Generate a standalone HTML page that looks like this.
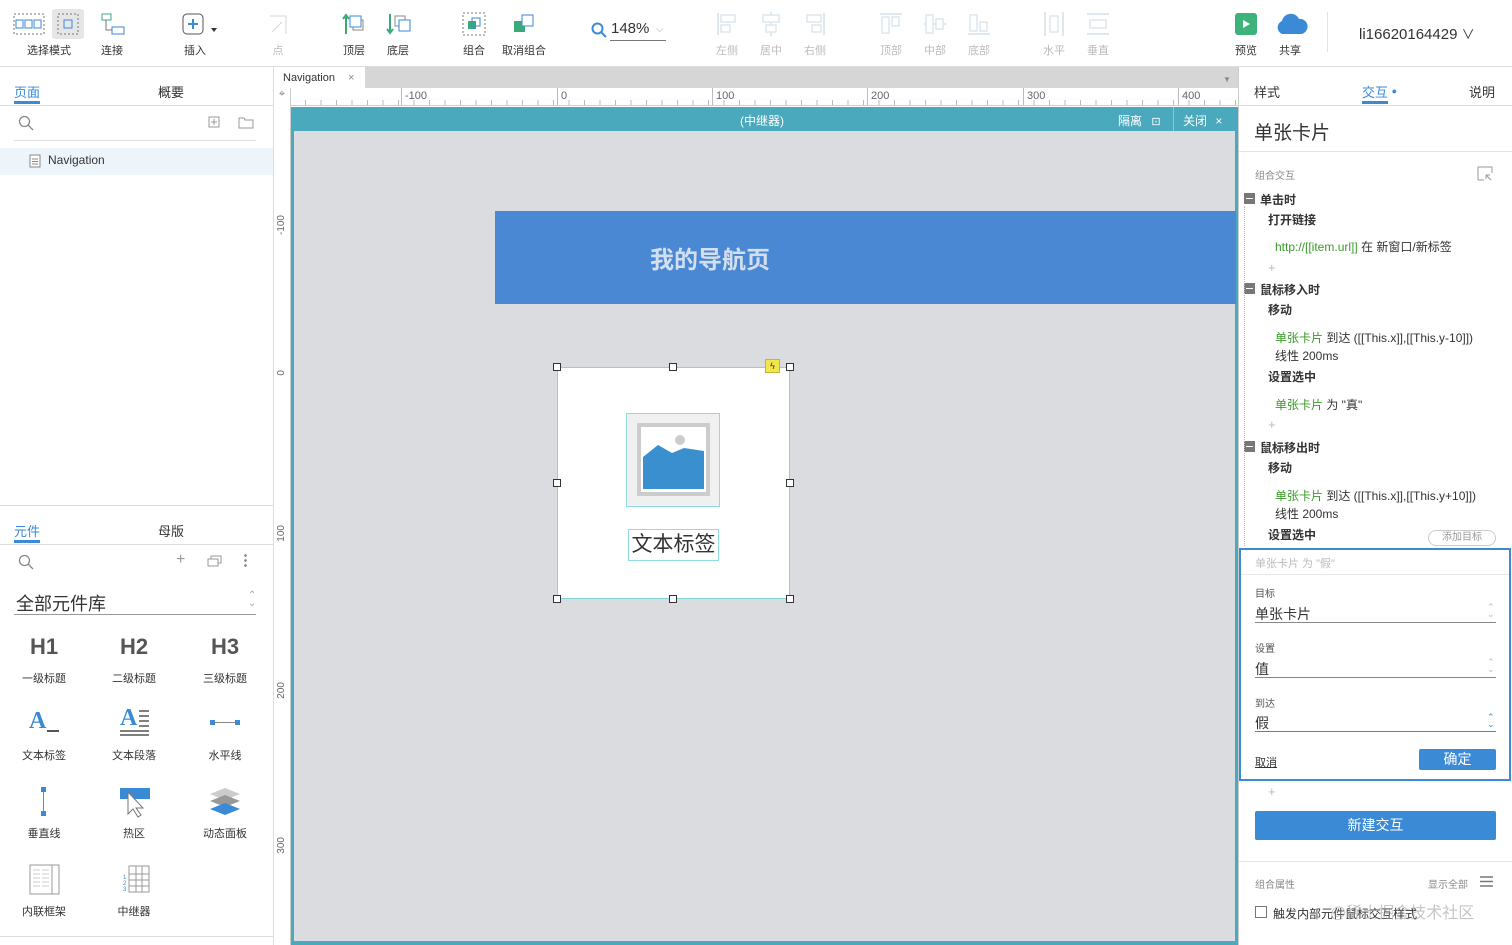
<!DOCTYPE html>
<html><head><meta charset="utf-8"><style>
*{margin:0;padding:0;box-sizing:border-box}
body{width:1512px;height:945px;overflow:hidden;background:#fff;font-family:"Liberation Sans","Noto Sans CJK SC",sans-serif;color:#333;position:relative}
.a{position:absolute}
.tl{position:absolute;font-size:11px;color:#333;text-align:center;width:70px}
.dis{color:#bbb}
.ico{position:absolute}
.rt{font-size:12px;color:#333}
.g{color:#3a9a2a}
.b{font-weight:bold}
.al{position:absolute;top:12px;width:22px;height:24px}
</style></head><body>
<!-- toolbar -->
<div class="a" style="left:0;top:0;width:1512px;height:67px;border-bottom:1px solid #ddd;background:#fff"></div>
<div class="a" style="left:52px;top:9px;width:32px;height:30px;background:#e6e6e6;border-radius:3px"></div>
<svg class="ico" style="left:13px;top:13px" width="32" height="22"><rect x="1" y="1" width="30" height="20" fill="none" stroke="#777" stroke-dasharray="2 2"/><rect x="3" y="7" width="7" height="8" fill="none" stroke="#3a8ad6"/><rect x="12" y="7" width="7" height="8" fill="none" stroke="#3a8ad6"/><rect x="21" y="7" width="7" height="8" fill="none" stroke="#3a8ad6"/></svg>
<svg class="ico" style="left:57px;top:13px" width="22" height="22"><rect x="1" y="1" width="20" height="20" fill="none" stroke="#777" stroke-dasharray="2 2"/><rect x="7" y="7" width="8" height="8" fill="none" stroke="#3a8ad6"/></svg>
<svg class="ico" style="left:101px;top:13px" width="24" height="22"><rect x="1" y="1" width="9" height="6" fill="none" stroke="#3aaa7a"/><rect x="11" y="14" width="12" height="7" fill="none" stroke="#3a8ad6"/><path d="M5 7v10h6" fill="none" stroke="#777"/></svg>
<svg class="ico" style="left:182px;top:13px" width="36" height="24"><rect x="1" y="1" width="20" height="20" rx="4" fill="none" stroke="#555"/><path d="M11 6v10M6 11h10" stroke="#3a8ad6" stroke-width="2"/><path d="M29 15l3 4 3-4z" fill="#333"/></svg>
<svg class="ico" style="left:268px;top:14px" width="22" height="22" opacity=".35"><path d="M2 2h16v18M4 18l10-10" fill="none" stroke="#888"/></svg>
<svg class="ico" style="left:342px;top:12px" width="26" height="24"><path d="M4 22V3M1 7l3-4 3 4" fill="none" stroke="#3aaa7a" stroke-width="2"/><rect x="11" y="8" width="10" height="10" fill="none" stroke="#888"/><rect x="8" y="4" width="11" height="11" fill="#fff" stroke="#3a8ad6"/></svg>
<svg class="ico" style="left:386px;top:12px" width="26" height="24"><path d="M4 2v19M1 17l3 4 3-4" fill="none" stroke="#3aaa7a" stroke-width="2"/><rect x="9" y="4" width="10" height="10" fill="none" stroke="#888"/><rect x="13" y="8" width="11" height="11" fill="#fff" stroke="#3a8ad6"/></svg>
<svg class="ico" style="left:462px;top:12px" width="24" height="24"><rect x="1" y="1" width="22" height="22" fill="none" stroke="#777" stroke-dasharray="2 2"/><rect x="6" y="9" width="8" height="8" fill="#3aaa7a"/><rect x="10" y="6" width="8" height="8" fill="none" stroke="#3a8ad6"/></svg>
<svg class="ico" style="left:512px;top:12px" width="24" height="24"><rect x="2" y="9" width="11" height="11" fill="#3aaa7a"/><rect x="10" y="3" width="11" height="11" fill="#fff" stroke="#3a8ad6"/></svg>
<div class="tl" style="left:14px;top:42px">选择模式</div>
<div class="tl" style="left:77px;top:42px">连接</div>
<div class="tl" style="left:160px;top:42px">插入</div>
<div class="tl dis" style="left:243px;top:42px">点</div>
<div class="tl" style="left:319px;top:42px">顶层</div>
<div class="tl" style="left:363px;top:42px">底层</div>
<div class="tl" style="left:439px;top:42px">组合</div>
<div class="tl" style="left:489px;top:42px">取消组合</div>
<svg class="ico" style="left:591px;top:22px" width="16" height="16"><circle cx="6.5" cy="6.5" r="5" fill="none" stroke="#3a8ad6" stroke-width="2"/><path d="M10 10l5 5" stroke="#3a8ad6" stroke-width="2"/></svg>
<div class="a" style="left:611px;top:20px;font-size:15px;color:#333">148%</div>
<div class="a" style="left:656px;top:24px;font-size:10px;color:#aaa">⌵</div>
<div class="a" style="left:610px;top:40px;width:56px;border-top:1px solid #777"></div>
<svg class="al" style="left:716px"><rect x="1" y="1" width="2" height="22" fill="#dde7ee"/><rect x="5" y="3" width="14" height="7" fill="none" stroke="#dde7ee" stroke-width="1.5"/><rect x="5" y="13" width="9" height="7" fill="none" stroke="#dde7ee" stroke-width="1.5"/></svg>
<svg class="al" style="left:760px"><rect x="10" y="0" width="2" height="24" fill="#dde7ee"/><rect x="3" y="3" width="16" height="7" fill="#fff" stroke="#dde7ee" stroke-width="1.5"/><rect x="6" y="13" width="10" height="7" fill="#fff" stroke="#dde7ee" stroke-width="1.5"/></svg>
<svg class="al" style="left:804px"><rect x="19" y="1" width="2" height="22" fill="#dde7ee"/><rect x="3" y="3" width="14" height="7" fill="none" stroke="#dde7ee" stroke-width="1.5"/><rect x="8" y="13" width="9" height="7" fill="none" stroke="#dde7ee" stroke-width="1.5"/></svg>
<svg class="al" style="left:880px"><rect x="0" y="1" width="22" height="2" fill="#dde7ee"/><rect x="2" y="5" width="7" height="16" fill="none" stroke="#dde7ee" stroke-width="1.5"/><rect x="12" y="5" width="7" height="9" fill="none" stroke="#dde7ee" stroke-width="1.5"/></svg>
<svg class="al" style="left:924px"><rect x="0" y="11" width="22" height="2" fill="#dde7ee"/><rect x="2" y="3" width="7" height="18" fill="#fff" stroke="#dde7ee" stroke-width="1.5"/><rect x="12" y="7" width="7" height="10" fill="#fff" stroke="#dde7ee" stroke-width="1.5"/></svg>
<svg class="al" style="left:968px"><rect x="0" y="21" width="22" height="2" fill="#dde7ee"/><rect x="2" y="3" width="7" height="16" fill="none" stroke="#dde7ee" stroke-width="1.5"/><rect x="12" y="10" width="7" height="9" fill="none" stroke="#dde7ee" stroke-width="1.5"/></svg>
<svg class="al" style="left:1043px"><rect x="1" y="0" width="2" height="24" fill="#dde7ee"/><rect x="19" y="0" width="2" height="24" fill="#dde7ee"/><rect x="7" y="4" width="8" height="16" fill="none" stroke="#dde7ee" stroke-width="1.5"/></svg>
<svg class="al" style="left:1087px"><rect x="0" y="1" width="22" height="2" fill="#dde7ee"/><rect x="0" y="21" width="22" height="2" fill="#dde7ee"/><rect x="3" y="8" width="16" height="8" fill="none" stroke="#dde7ee" stroke-width="1.5"/></svg>
<div class="tl dis" style="left:692px;top:42px">左侧</div>
<div class="tl dis" style="left:736px;top:42px">居中</div>
<div class="tl dis" style="left:780px;top:42px">右侧</div>
<div class="tl dis" style="left:856px;top:42px">顶部</div>
<div class="tl dis" style="left:900px;top:42px">中部</div>
<div class="tl dis" style="left:944px;top:42px">底部</div>
<div class="tl dis" style="left:1019px;top:42px">水平</div>
<div class="tl dis" style="left:1063px;top:42px">垂直</div>
<div class="a" style="left:1235px;top:13px;width:22px;height:22px;background:#3db27a;border-radius:3px"></div>
<svg class="ico" style="left:1242px;top:19px" width="9" height="10"><path d="M1 1l7 4-7 4z" fill="#fff"/></svg>
<svg class="ico" style="left:1274px;top:12px" width="34" height="24"><path d="M8 22a7 7 0 0 1 0-13a9 9 0 0 1 17-2a7 7 0 0 1 2 15z" fill="#3a8ad6"/></svg>
<div class="tl" style="left:1211px;top:42px">预览</div>
<div class="tl" style="left:1255px;top:42px">共享</div>
<div class="a" style="left:1327px;top:12px;height:40px;border-left:1px solid #e4e4e4"></div>
<div class="a" style="left:1359px;top:24px;font-size:15px;color:#333">li16620164429 <span style="font-size:13px">∨</span></div>

<!-- left panel -->
<div class="a" style="left:273px;top:67px;height:878px;border-left:1px solid #ddd"></div>
<div class="a" style="left:14px;top:82px;font-size:13px;color:#3a8ad6">页面</div>
<div class="a" style="left:14px;top:101px;width:26px;height:3px;background:#3a8ad6"></div>
<div class="a" style="left:158px;top:82px;font-size:13px">概要</div>
<div class="a" style="left:0;top:105px;width:273px;border-top:1px solid #ddd"></div>
<svg class="ico" style="left:18px;top:115px" width="16" height="16"><circle cx="6.5" cy="6.5" r="5" fill="none" stroke="#888" stroke-width="1.3"/><path d="M10 10l5 5" stroke="#888" stroke-width="1.3"/></svg>
<svg class="ico" style="left:208px;top:116px" width="46" height="14"><rect x="1" y="1" width="10" height="10" fill="none" stroke="#999"/><path d="M6 3v6M3 6h6" stroke="#999"/><path d="M31 2h5l1 2h8v8H31z" fill="none" stroke="#999"/></svg>
<div class="a" style="left:14px;top:140px;width:242px;border-top:1px solid #ddd"></div>
<div class="a" style="left:0;top:148px;width:273px;height:27px;background:#eef5fa"></div>
<svg class="ico" style="left:29px;top:154px" width="12" height="14"><rect x="1" y="1" width="10" height="12" fill="#fff" stroke="#888"/><path d="M3 5h6M3 7.5h6M3 10h6" stroke="#888"/></svg>
<div class="a" style="left:48px;top:153px;font-size:12px;color:#333">Navigation</div>
<div class="a" style="left:0;top:505px;width:273px;border-top:1px solid #ddd"></div>
<div class="a" style="left:14px;top:521px;font-size:13px;color:#3a8ad6">元件</div>
<div class="a" style="left:14px;top:540px;width:26px;height:3px;background:#3a8ad6"></div>
<div class="a" style="left:158px;top:521px;font-size:13px">母版</div>
<div class="a" style="left:0;top:544px;width:273px;border-top:1px solid #ddd"></div>
<svg class="ico" style="left:18px;top:554px" width="16" height="16"><circle cx="6.5" cy="6.5" r="5" fill="none" stroke="#888" stroke-width="1.3"/><path d="M10 10l5 5" stroke="#888" stroke-width="1.3"/></svg>
<div class="a" style="left:176px;top:551px;font-size:16px;color:#999">+</div>
<svg class="ico" style="left:207px;top:555px" width="16" height="12"><rect x="1" y="4" width="10" height="7" fill="none" stroke="#999"/><path d="M4 4V1h10v7h-3" fill="none" stroke="#999"/></svg>
<div class="a" style="left:244px;top:553px;width:3px;height:14px;background:radial-gradient(circle,#888 1.2px,transparent 1.5px) 0 0/3px 5px"></div>
<div class="a" style="left:16px;top:590px;font-size:18px;color:#333">全部元件库</div>
<div class="a" style="left:248px;top:592px;font-size:10px;color:#aaa;line-height:8px">⌃<br>⌄</div>
<div class="a" style="left:14px;top:614px;width:242px;border-top:1px solid #999"></div>
<div class="a" style="left:30px;top:634px;font-size:22px;font-weight:bold;color:#555">H1</div>
<div class="a" style="left:120px;top:634px;font-size:22px;font-weight:bold;color:#555">H2</div>
<div class="a" style="left:211px;top:634px;font-size:22px;font-weight:bold;color:#555">H3</div>
<div class="tl" style="left:9px;top:670px">一级标题</div>
<div class="tl" style="left:99px;top:670px">二级标题</div>
<div class="tl" style="left:190px;top:670px">三级标题</div>
<div class="a" style="left:29px;top:708px;font-size:24px;font-weight:bold;color:#3a8ad6;font-family:'Liberation Serif',serif">A</div>
<div class="a" style="left:47px;top:730px;width:12px;height:2px;background:#555"></div>
<div class="a" style="left:120px;top:705px;font-size:24px;font-weight:bold;color:#3a8ad6;font-family:'Liberation Serif',serif">A</div>
<svg class="ico" style="left:119px;top:709px" width="32" height="28"><path d="M20 2h10M20 7h10M20 12h10M20 17h10M1 22h29M1 26h29" stroke="#555" stroke-width="1.5"/></svg>
<svg class="ico" style="left:209px;top:718px" width="32" height="10"><rect x="1" y="2" width="5" height="5" fill="#3a8ad6"/><rect x="26" y="2" width="5" height="5" fill="#3a8ad6"/><path d="M6 4.5h20" stroke="#888"/></svg>
<div class="tl" style="left:9px;top:747px">文本标签</div>
<div class="tl" style="left:99px;top:747px">文本段落</div>
<div class="tl" style="left:190px;top:747px">水平线</div>
<svg class="ico" style="left:39px;top:786px" width="10" height="32"><rect x="2" y="1" width="5" height="5" fill="#3a8ad6"/><rect x="2" y="25" width="5" height="5" fill="#3a8ad6"/><path d="M4.5 6v19" stroke="#888"/></svg>
<svg class="ico" style="left:119px;top:787px" width="32" height="32"><rect x="1" y="1" width="30" height="11" fill="#3a8ad6"/><path d="M9 5v22l5-5 5 8 3-2-5-7h7z" fill="#fff" stroke="#777"/></svg>
<svg class="ico" style="left:209px;top:787px" width="32" height="30"><path d="M16 1l15 6-15 6-15-6z" fill="#ccc"/><path d="M16 8l15 6-15 6-15-6z" fill="#999"/><path d="M16 16l15 6-15 6-15-6z" fill="#3a8ad6"/></svg>
<div class="tl" style="left:9px;top:825px">垂直线</div>
<div class="tl" style="left:99px;top:825px">热区</div>
<div class="tl" style="left:190px;top:825px">动态面板</div>
<svg class="ico" style="left:29px;top:864px" width="32" height="32"><rect x="1" y="1" width="29" height="29" fill="#fff" stroke="#999"/><rect x="23" y="1" width="7" height="29" fill="none" stroke="#999"/><path d="M4 6h7M13 6h7M4 10h7M13 10h7M4 14h7M13 14h7M4 18h7M13 18h7M4 22h7M13 22h7" stroke="#ccc"/></svg>
<svg class="ico" style="left:120px;top:864px" width="32" height="32"><path d="M9 2h20v26H9zM9 10h20M9 16h20M9 22h20M16 2v26M22 2v26" fill="none" stroke="#999"/><text x="3" y="15" font-size="6" fill="#3a8ad6">1</text><text x="3" y="21" font-size="6" fill="#3a8ad6">2</text><text x="3" y="27" font-size="6" fill="#3a8ad6">3</text></svg>
<div class="tl" style="left:9px;top:903px">内联框架</div>
<div class="tl" style="left:99px;top:903px">中继器</div>
<div class="a" style="left:0;top:936px;width:273px;border-top:1px solid #ddd"></div>

<!-- canvas -->
<div class="a" style="left:274px;top:67px;width:964px;height:21px;background:#d6d6d6"></div>
<div class="a" style="left:274px;top:67px;width:91px;height:21px;background:#fff;font-size:11px;padding:5px 0 0 9px;color:#333">Navigation <span style="color:#888;margin-left:10px">×</span></div>
<div class="a" style="left:1223px;top:75px;font-size:8px;color:#888">▼</div>
<div class="a" style="left:274px;top:88px;width:964px;height:18px;background:#fff;border-bottom:1px solid #ccc;background-image:repeating-linear-gradient(90deg,#bbb 0 1px,transparent 1px 15.5px);background-size:100% 5px;background-repeat:no-repeat;background-position:0 100%"></div>
<div class="a" style="left:274px;top:88px;width:17px;height:18px;background:#fff;border-right:1px solid #ccc;font-size:11px;color:#888;text-align:center">⌖</div>
<div class="a" style="left:401px;top:88px;height:17px;border-left:1px solid #bbb;font-size:11px;color:#666;padding:2px 3px">-100</div>
<div class="a" style="left:557px;top:88px;height:17px;border-left:1px solid #bbb;font-size:11px;color:#666;padding:2px 3px">0</div>
<div class="a" style="left:712px;top:88px;height:17px;border-left:1px solid #bbb;font-size:11px;color:#666;padding:2px 3px">100</div>
<div class="a" style="left:867px;top:88px;height:17px;border-left:1px solid #bbb;font-size:11px;color:#666;padding:2px 3px">200</div>
<div class="a" style="left:1023px;top:88px;height:17px;border-left:1px solid #bbb;font-size:11px;color:#666;padding:2px 3px">300</div>
<div class="a" style="left:1178px;top:88px;height:17px;border-left:1px solid #bbb;font-size:11px;color:#666;padding:2px 3px">400</div>
<div class="a" style="left:274px;top:106px;width:17px;height:839px;background:#fff;border-right:1px solid #ccc"></div>
<div class="a" style="left:276px;top:215px;font-size:10px;color:#666;writing-mode:vertical-rl;transform:rotate(180deg)">-100</div>
<div class="a" style="left:276px;top:370px;font-size:10px;color:#666;writing-mode:vertical-rl;transform:rotate(180deg)">0</div>
<div class="a" style="left:276px;top:525px;font-size:10px;color:#666;writing-mode:vertical-rl;transform:rotate(180deg)">100</div>
<div class="a" style="left:276px;top:682px;font-size:10px;color:#666;writing-mode:vertical-rl;transform:rotate(180deg)">200</div>
<div class="a" style="left:276px;top:837px;font-size:10px;color:#666;writing-mode:vertical-rl;transform:rotate(180deg)">300</div>
<div class="a" style="left:291px;top:107px;width:947px;height:838px;background:#4aa9bc"></div>
<div class="a" style="left:294px;top:131px;width:941px;height:810px;background:#dbdcdf"></div>
<div class="a" style="left:740px;top:112px;font-size:12px;color:#fff">(中继器)</div>
<div class="a" style="left:1118px;top:112px;font-size:12px;color:#fff">隔离 <span style="font-size:11px;margin-left:6px">⊡</span></div>
<div class="a" style="left:1173px;top:107px;height:24px;border-left:1px solid #8cc9d5"></div>
<div class="a" style="left:1183px;top:112px;font-size:12px;color:#fff">关闭 <span style="margin-left:5px">×</span></div>
<div class="a" style="left:495px;top:211px;width:741px;height:93px;background:#4a88d3"></div>
<div class="a" style="left:650px;top:240px;font-size:24px;font-weight:bold;color:#d2dff0">我的导航页</div>
<!-- card -->
<div class="a" style="left:557px;top:367px;width:233px;height:232px;background:#fff;border:1px solid #7fd6dc"></div>
<div class="a" style="left:626px;top:413px;width:94px;height:94px;background:#f0f0f0;border:1px solid #8fdce0"></div>
<div class="a" style="left:637px;top:423px;width:73px;height:73px;background:#ccc;border:1px solid #9ee0e3"></div>
<svg class="ico" style="left:641px;top:427px" width="65" height="65"><rect width="65" height="65" fill="#fff"/><circle cx="39" cy="13" r="5" fill="#ccc"/><path d="M2 30l15-12 14 8 12-5 20 3v38H2z" fill="#3a8fcf"/></svg>
<div class="a" style="left:628px;top:529px;width:91px;height:32px;border:1px solid #8fdce0;font-size:21px;color:#333;text-align:center;line-height:30px">文本标签</div>
<div class="a" style="left:765px;top:359px;width:15px;height:14px;background:#f3e64a;border:1px solid #c9b52b;font-size:9px;text-align:center;line-height:12px">ϟ</div>
<div class="a" style="left:553px;top:363px;width:8px;height:8px;background:#fff;border:1px solid #333"></div>
<div class="a" style="left:669px;top:363px;width:8px;height:8px;background:#fff;border:1px solid #333"></div>
<div class="a" style="left:786px;top:363px;width:8px;height:8px;background:#fff;border:1px solid #333"></div>
<div class="a" style="left:553px;top:479px;width:8px;height:8px;background:#fff;border:1px solid #333"></div>
<div class="a" style="left:786px;top:479px;width:8px;height:8px;background:#fff;border:1px solid #333"></div>
<div class="a" style="left:553px;top:595px;width:8px;height:8px;background:#fff;border:1px solid #333"></div>
<div class="a" style="left:669px;top:595px;width:8px;height:8px;background:#fff;border:1px solid #333"></div>
<div class="a" style="left:786px;top:595px;width:8px;height:8px;background:#fff;border:1px solid #333"></div>

<!-- right panel -->
<div class="a" style="left:1238px;top:67px;width:274px;height:878px;background:#fff;border-left:1px solid #ccc"></div>
<div class="a" style="left:1254px;top:82px;font-size:13px">样式</div>
<div class="a" style="left:1362px;top:82px;font-size:13px;color:#3a8ad6">交互 <span style="font-size:9px;vertical-align:3px">●</span></div>
<div class="a" style="left:1362px;top:101px;width:26px;height:3px;background:#3a8ad6"></div>
<div class="a" style="left:1469px;top:82px;font-size:13px">说明</div>
<div class="a" style="left:1239px;top:105px;width:273px;border-top:1px solid #ddd"></div>
<div class="a" style="left:1254px;top:118px;font-size:19px;color:#333">单张卡片</div>
<div class="a" style="left:1239px;top:151px;width:273px;border-top:1px solid #e4e4e4"></div>
<div class="a" style="left:1255px;top:167px;font-size:10px;color:#888">组合交互</div>
<svg class="ico" style="left:1477px;top:166px" width="16" height="15"><path d="M1 14V1h14v6M1 14h6" fill="none" stroke="#999"/><path d="M14 14L9 9M9 9v4M9 9h4" fill="none" stroke="#999"/></svg>
<div class="a" style="left:1244px;top:193px;width:11px;height:11px;background:#777"><div style="margin:5px 2px;height:1px;background:#fff"></div></div>
<div class="a" style="left:1244px;top:283px;width:11px;height:11px;background:#777"><div style="margin:5px 2px;height:1px;background:#fff"></div></div>
<div class="a" style="left:1244px;top:441px;width:11px;height:11px;background:#777"><div style="margin:5px 2px;height:1px;background:#fff"></div></div>
<div class="a" style="left:1244px;top:206px;height:340px;border-left:1px dotted #bbb"></div>
<div class="a rt b" style="left:1260px;top:191px">单击时</div>
<div class="a rt b" style="left:1268px;top:211px">打开链接</div>
<div class="a rt" style="left:1275px;top:238px"><span class="g">http://[[item.url]]</span> 在 新窗口/新标签</div>
<div class="a" style="left:1268px;top:260px;color:#bbb;font-size:13px">+</div>
<div class="a rt b" style="left:1260px;top:281px">鼠标移入时</div>
<div class="a rt b" style="left:1268px;top:301px">移动</div>
<div class="a rt" style="left:1275px;top:329px;line-height:18px"><span class="g">单张卡片</span> 到达 ([[This.x]],[[This.y-10]])<br>线性 200ms</div>
<div class="a rt b" style="left:1268px;top:368px">设置选中</div>
<div class="a rt" style="left:1275px;top:396px"><span class="g">单张卡片</span> 为 "真"</div>
<div class="a" style="left:1268px;top:417px;color:#bbb;font-size:13px">+</div>
<div class="a rt b" style="left:1260px;top:439px">鼠标移出时</div>
<div class="a rt b" style="left:1268px;top:459px">移动</div>
<div class="a rt" style="left:1275px;top:487px;line-height:18px"><span class="g">单张卡片</span> 到达 ([[This.x]],[[This.y+10]])<br>线性 200ms</div>
<div class="a rt b" style="left:1268px;top:526px">设置选中</div>
<div class="a" style="left:1428px;top:530px;width:68px;height:16px;border:1px solid #ccc;border-radius:8px;font-size:10px;color:#999;text-align:center;line-height:14px">添加目标</div>
<div class="a" style="left:1239px;top:548px;width:272px;height:233px;border:2px solid #3a8ad6;background:#fff"></div>
<div class="a" style="left:1255px;top:555px;font-size:11px;color:#bbb">单张卡片 为 "假"</div>
<div class="a" style="left:1241px;top:574px;width:268px;border-top:1px solid #e6e6e6"></div>
<div class="a" style="left:1255px;top:585px;font-size:10px;color:#555">目标</div>
<div class="a" style="left:1255px;top:604px;font-size:14px;color:#333">单张卡片</div>
<div class="a" style="left:1255px;top:622px;width:241px;border-top:1px solid #888"></div>
<div class="a" style="left:1255px;top:640px;font-size:10px;color:#555">设置</div>
<div class="a" style="left:1255px;top:659px;font-size:14px;color:#333">值</div>
<div class="a" style="left:1255px;top:677px;width:241px;border-top:1px solid #888"></div>
<div class="a" style="left:1255px;top:695px;font-size:10px;color:#555">到达</div>
<div class="a" style="left:1255px;top:713px;font-size:14px;color:#333">假</div>
<div class="a" style="left:1255px;top:731px;width:241px;border-top:1px solid #3a8ad6"></div>
<div class="a" style="left:1487px;top:604px;font-size:9px;color:#bbb;line-height:7px">⌃<br>⌄</div>
<div class="a" style="left:1487px;top:659px;font-size:9px;color:#bbb;line-height:7px">⌃<br>⌄</div>
<div class="a" style="left:1487px;top:714px;font-size:9px;color:#3a8ad6;line-height:7px">⌃<br>⌄</div>
<div class="a" style="left:1255px;top:754px;font-size:11px;color:#333;text-decoration:underline">取消</div>
<div class="a" style="left:1419px;top:749px;width:77px;height:21px;background:#3a8ad6;border-radius:2px;color:#fff;font-size:14px;text-align:center;line-height:21px">确定</div>
<div class="a" style="left:1268px;top:784px;color:#bbb;font-size:13px">+</div>
<div class="a" style="left:1255px;top:811px;width:241px;height:29px;background:#3a8ad6;border-radius:2px;color:#fff;font-size:14px;text-align:center;line-height:29px">新建交互</div>
<div class="a" style="left:1239px;top:861px;width:273px;border-top:1px solid #e4e4e4"></div>
<div class="a" style="left:1255px;top:876px;font-size:10px;color:#888">组合属性</div>
<div class="a" style="left:1428px;top:876px;font-size:10px;color:#888">显示全部</div>
<svg class="ico" style="left:1480px;top:876px" width="13" height="11"><path d="M0 1h13M0 5.5h13M0 10h13" stroke="#777" stroke-width="1.5"/></svg>
<div class="a" style="left:1255px;top:906px;width:12px;height:12px;border:1px solid #777;background:#fff"></div>
<div class="a" style="left:1273px;top:905px;font-size:12px;color:#333">触发内部元件鼠标交互样式</div>
<div class="a" style="left:1330px;top:899px;font-size:16px;color:rgba(150,150,150,.55)">@稀土掘金技术社区</div>
</body></html>
